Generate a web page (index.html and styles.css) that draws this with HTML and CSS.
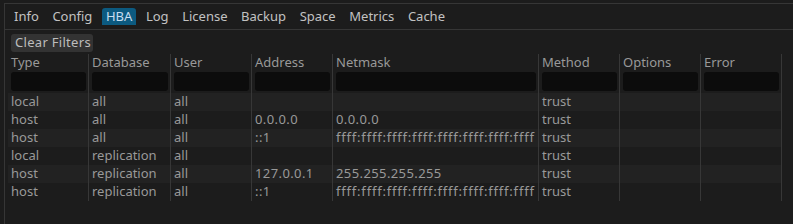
FILE: index.html
```html
<!DOCTYPE html>
<html>
<head>
<meta charset="utf-8">
<link rel="stylesheet" href="styles.css">
</head>
<body>
<div class="frame">
  <div class="tabbar">
    <span class="tab">Info</span>
    <span class="tab">Config</span>
    <span class="tab active">HBA</span>
    <span class="tab">Log</span>
    <span class="tab">License</span>
    <span class="tab">Backup</span>
    <span class="tab">Space</span>
    <span class="tab">Metrics</span>
    <span class="tab">Cache</span>
  </div>
  <div class="tabline"></div>
  <div class="toolbar"><button class="btn">Clear Filters</button></div>
  <div class="grid">
    <div class="hd">Type</div><div class="hd">Database</div><div class="hd">User</div><div class="hd">Address</div><div class="hd">Netmask</div><div class="hd">Method</div><div class="hd">Options</div><div class="hd">Error</div>
    <div class="fc"><span class="filter"></span></div><div class="fc"><span class="filter"></span></div><div class="fc"><span class="filter"></span></div><div class="fc"><span class="filter"></span></div><div class="fc"><span class="filter"></span></div><div class="fc"><span class="filter"></span></div><div class="fc"><span class="filter"></span></div><div class="fc"><span class="filter"></span></div>

    <div class="c odd">local</div><div class="c odd">all</div><div class="c odd">all</div><div class="c odd"></div><div class="c odd"></div><div class="c odd">trust</div><div class="c odd"></div><div class="c odd"></div>
    <div class="c">host</div><div class="c">all</div><div class="c">all</div><div class="c ip">0.0.0.0</div><div class="c ip">0.0.0.0</div><div class="c">trust</div><div class="c"></div><div class="c"></div>
    <div class="c odd">host</div><div class="c odd">all</div><div class="c odd">all</div><div class="c odd ip">::1</div><div class="c odd mask6">ffff:ffff:ffff:ffff:ffff:ffff:ffff:ffff</div><div class="c odd">trust</div><div class="c odd"></div><div class="c odd"></div>
    <div class="c">local</div><div class="c">replication</div><div class="c">all</div><div class="c"></div><div class="c"></div><div class="c">trust</div><div class="c"></div><div class="c"></div>
    <div class="c odd">host</div><div class="c odd">replication</div><div class="c odd">all</div><div class="c odd ip">127.0.0.1</div><div class="c odd ip">255.255.255.255</div><div class="c odd">trust</div><div class="c odd"></div><div class="c odd"></div>
    <div class="c">host</div><div class="c">replication</div><div class="c">all</div><div class="c ip">::1</div><div class="c mask6">ffff:ffff:ffff:ffff:ffff:ffff:ffff:ffff</div><div class="c">trust</div><div class="c"></div><div class="c"></div>
  </div>
</div>
</body>
</html>
```
FILE: styles.css
```css
html, body {
  margin: 0;
  padding: 0;
  background: #1c1c1c;
  overflow: hidden;
  width: 793px;
  height: 224px;
}
body {
  font-family: "Noto Sans", "DejaVu Sans", sans-serif;
  font-size: 13px;
  color: #a0a0a0;
}
.frame {
  margin: 3px 0 0 4px;
  width: 789px;
  height: 221px;
  border-top: 1px solid #363636;
  border-left: 1px solid #363636;
  box-sizing: border-box;
  overflow: hidden;
}
.tabbar {
  display: flex;
  gap: 5.6px;
  padding: 4px 0 0 5px;
  height: 17px;
}
.tab {
  height: 17px;
  line-height: 16px;
  padding: 0 4px;
  color: #c2c2c2;
  border-radius: 3px 3px 0 0;
}
.tab.active {
  background: #0c5a80;
  color: #c8def0;
}
.tabline {
  margin-top: 4px;
  height: 1px;
  background: #363636;
}
.toolbar {
  padding: 4px 0 0 6px;
  height: 18px;
}
.btn {
  display: block;
  width: 82px;
  height: 18px;
  margin: 0;
  padding: 0 0 1px 4px;
  text-align: left;
  letter-spacing: 0.3px;
  border: none;
  border-radius: 3px;
  background: #333333;
  color: #bdbdbd;
  font: inherit;
  line-height: 17px;
}
.grid {
  margin: 2px 0 0 3px;
  display: grid;
  grid-template-columns: 81px 82px 81px 81px 206px 81px 81px 81px;
  width: 774px;
}
.hd, .fc, .c {
  border-right: 1px solid #373737;
  padding: 0 2px 0 3px;
  white-space: nowrap;
  overflow: hidden;
}
.hd {
  height: 18px;
  line-height: 16px;
  color: #999999;
}
.fc {
  height: 21px;
}
.filter {
  display: block;
  height: 19px;
  border-radius: 3px;
  background: #0c0c0c;
}
.c {
  height: 18px;
  line-height: 16px;
  color: #999999;
}
.c.odd {
  background: #222222;
}
.ip {
  letter-spacing: 0.4px;
}
.mask6 {
  letter-spacing: 0.8px;
}
```
